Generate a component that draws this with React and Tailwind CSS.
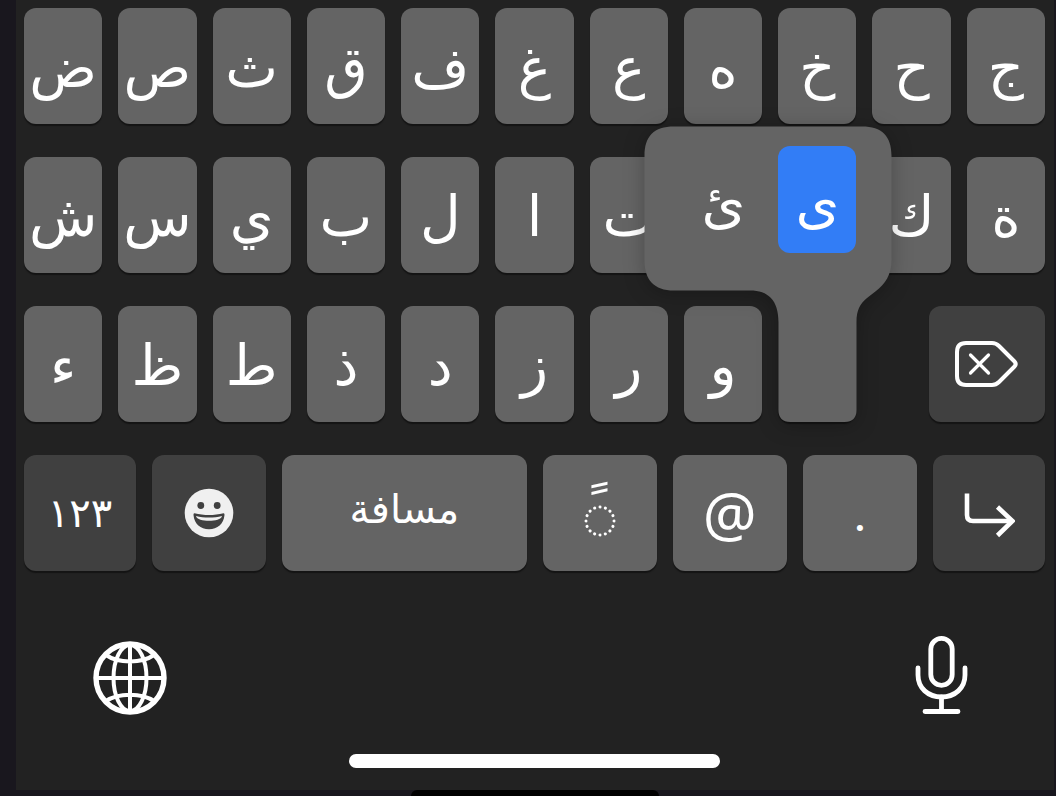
import clsx from 'clsx'

const TOP_ROW = ['ض', 'ص', 'ث', 'ق', 'ف', 'غ', 'ع', 'ه', 'خ', 'ح', 'ج']
const HOME_ROW = ['ش', 'س', 'ي', 'ب', 'ل', 'ا', 'ت', 'ن', 'م', 'ك', 'ة']
const BOTTOM_ROW = ['ء', 'ظ', 'ط', 'ذ', 'د', 'ز', 'ر', 'و']

// Keys that sit fully behind the open balloon
const COVERED = ['ن', 'م']

// ── Icons ────────────────────────────────────────────────────────────────────

function BackspaceIcon() {
  return (
    <svg width="64" height="48" viewBox="0 0 64 48" fill="none" stroke="currentColor" strokeLinecap="round" strokeLinejoin="round">
      <path strokeWidth="4" d="M11 3 H37 Q41 3 44 6 L59.500 21.500 Q62 24 59.500 26.500 L44 42 Q41 45 37 45 H11 Q2 45 2 36 V12 Q2 3 11 3 Z" />
      <path strokeWidth="3.2" d="M15.500 15 L33.500 33 M33.500 15 L15.500 33" />
    </svg>
  )
}

function ReturnIcon() {
  return (
    <svg width="52" height="46" viewBox="0 0 52 46" fill="none" stroke="currentColor" strokeWidth="4.6">
      <path d="M4 0.500 V22 Q4 28 10 28 H49" />
      <path d="M34.500 14 L49.500 28 L34.500 42.500" />
    </svg>
  )
}

function EmojiIcon() {
  return (
    <svg width="50" height="50" viewBox="0 0 50 50">
      <circle cx="25" cy="25" r="24.300" fill="#f0f0f0" />
      <circle cx="16.800" cy="17.500" r="3.400" fill="#404040" />
      <circle cx="33.200" cy="17.500" r="3.400" fill="#404040" />
      <path fill="#404040" d="M10.500 25.300 Q9.300 25.200 9.500 27 C10.300 35.800 16.500 41.300 25 41.300 C33.500 41.300 39.700 35.800 40.500 27 Q40.700 25.200 39.500 25.300 C30 27.700 20 27.700 10.500 25.300 Z" />
      <path fill="#f0f0f0" d="M12 28 C20 30 30 30 38 28 C37.300 31.500 31 32.800 25 32.800 C19 32.800 12.700 31.500 12 28 Z" />
    </svg>
  )
}

function GlobeIcon() {
  return (
    <svg width="74" height="74" viewBox="0 0 74 74" fill="none" stroke="currentColor">
      <circle cx="37" cy="37" r="34" strokeWidth="5.4" />
      <ellipse cx="37" cy="37" rx="16.500" ry="33" strokeWidth="4" />
      <path strokeWidth="4" d="M37 3 V71 M3 37 H71 M13 14 C25 22.500 49 22.500 61 14 M13 60 C25 51.500 49 51.500 61 60" />
    </svg>
  )
}

function MicIcon() {
  return (
    <svg width="54" height="80" viewBox="0 0 54 80" fill="none" stroke="currentColor" strokeWidth="4.800" strokeLinecap="round">
      <rect x="15.800" y="3.300" width="21.400" height="47" rx="10.700" />
      <path d="M3 33 V40 C3 53 13 62 26.500 62 C40 62 50 53 50 40 V33" />
      <path d="M26.500 62 V76.500 M10 76.500 H43" />
    </svg>
  )
}

function DottedRing({ className }) {
  return (
    <svg className={className} width="32" height="32" viewBox="0 0 32 32" fill="none" stroke="currentColor">
      <circle cx="16" cy="16" r="14" pathLength="16" strokeWidth="3" strokeLinecap="round" strokeDasharray="0.010 0.990" />
    </svg>
  )
}

// ── Keys ─────────────────────────────────────────────────────────────────────

function Key({ dark, className, children, ...props }) {
  return (
    <button
      type="button"
      className={clsx(
        'flex h-[116px] min-w-0 items-center justify-center rounded-xl text-white shadow-[0_2px_1px_#141414]',
        dark ? 'bg-[#404040]' : 'bg-[#646464]',
        className,
      )}
      {...props}
    >
      {children}
    </button>
  )
}

function LetterRow({ letters, children }) {
  return (
    <div className="grid grid-cols-11 gap-4">
      {letters.map((letter) => (
        <Key key={letter} aria-label={letter} className="pt-1 text-[56px] leading-[64px]">
          {COVERED.includes(letter) ? null : letter}
        </Key>
      ))}
      {children}
    </div>
  )
}

// Held key with its balloon of alternate letters
function HeldKey() {
  return (
    <div className="relative z-10 h-[116px] rounded-xl shadow-[0_2px_1px_#141414]">
      <div className="absolute -right-9 bottom-0 h-[296px] w-[248px] text-white">
        <svg
          className="absolute inset-0 overflow-visible drop-shadow-[0_3px_10px_rgba(0,0,0,0.25)]"
          width="248"
          height="296"
          viewBox="0 0 248 296"
          fill="#646464"
        >
          <path d="M0.500 30 C0.500 10 10 0.500 30 0.500 H218 C238 0.500 247.500 10 247.500 30 V134 C247.500 149 241 158 232 165 L223 172 C216 178 212.500 184 212.500 196 V284 Q212.500 296 200.500 296 H146.500 Q134.500 296 134.500 284 V196 C134.500 174 124 164.500 106 164.500 H30 C10 164.500 0.500 154 0.500 134 Z" />
        </svg>
        <div className="relative flex justify-end gap-4 pt-5 pr-9 text-[56px] leading-[64px]">
          <button type="button" className="flex h-[107px] w-[78px] items-center justify-center rounded-xl pt-2">ئ</button>
          <button type="button" className="flex h-[107px] w-[78px] items-center justify-center rounded-xl bg-[#327df6] pt-2">ى</button>
        </div>
      </div>
    </div>
  )
}

export default function App() {
  return (
    <div className="flex min-h-screen flex-col bg-[#19171e] pr-0.5 pl-4 font-['DejaVu_Sans','Noto_Sans',sans-serif]">
      <main className="flex flex-1 flex-col bg-[#222222] pt-2 pr-[9px] pb-[22px] pl-2">
        <div className="flex flex-col gap-[33px]">
          <LetterRow letters={TOP_ROW} />
          <LetterRow letters={HOME_ROW} />
          <LetterRow letters={BOTTOM_ROW}>
            <HeldKey />
            <Key dark aria-label="حذف" className="col-span-2 w-[116px] justify-self-end">
              <BackspaceIcon />
            </Key>
          </LetterRow>
          <div className="grid grid-cols-[112fr_114fr_244fr_114fr_114fr_114fr_112fr] gap-4">
            <Key dark className="text-[40px] leading-[48px]">١٢٣</Key>
            <Key dark aria-label="رموز تعبيرية"><EmojiIcon /></Key>
            <Key className="pb-2 text-[40px] leading-[48px]">مسافة</Key>
            <Key aria-label="تشكيل" className="flex-col pt-1 text-[56px] leading-[32px]">
              <span>ﹰ</span>
              <DottedRing className="-mt-5" />
            </Key>
            <Key className="font-['Noto_Sans',sans-serif] text-[60px] leading-[64px]">@</Key>
            <Key className="font-['Lato',sans-serif] text-[48px] leading-[64px]">.</Key>
            <Key dark aria-label="رجوع" className="pt-1.5"><ReturnIcon /></Key>
          </div>
        </div>

        <div className="mt-16 flex h-20 items-end justify-between pr-[66px] pl-[69px] text-white">
          <button type="button" aria-label="لوحة المفاتيح التالية"><GlobeIcon /></button>
          <button type="button" aria-label="إملاء" className="flex w-[74px] justify-center"><MicIcon /></button>
        </div>

        {/* Home indicator */}
        <div className="mx-auto mt-[39px] h-3.5 w-[371px] rounded-full bg-white" />
      </main>
      <div className="mx-auto h-1.5 w-[248px] rounded-t-lg bg-black" />
    </div>
  )
}
